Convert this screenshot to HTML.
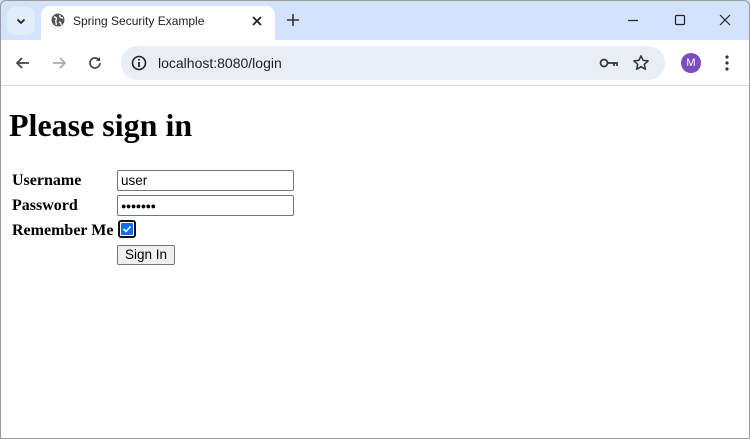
<!DOCTYPE html>
<html><head><style>
*{margin:0;padding:0;box-sizing:border-box}
body{width:750px;height:439px;overflow:hidden;background:#fff;position:relative;font-family:"Liberation Sans",sans-serif}
.frame{position:absolute;inset:0;border:1px solid #9a9a9a;border-radius:6px 6px 0 0;pointer-events:none;z-index:9}
.tabbar{position:absolute;left:0;top:0;width:750px;height:40px;background:#d3e3fd}
.tab{position:absolute;left:41px;top:6px;width:234px;height:36px;background:#fff;border-radius:9px 9px 0 0}
.tab .t{position:absolute;left:32px;top:8px;font-size:12px;color:#222}
.toolbar{position:absolute;left:0;top:40px;width:750px;height:46px;background:#fff;border-bottom:1px solid #d8d8d8}
.omni{position:absolute;left:121px;top:6px;width:544px;height:34px;background:#e9eef6;border-radius:17px}
.omni .u{position:absolute;left:37px;top:9px;font-size:14px;color:#1f1f1f}
svg{position:absolute}
h1{position:absolute;left:9px;top:107px;font-family:"Liberation Serif",serif;font-size:32px;font-weight:bold;color:#000;white-space:nowrap}
.lbl{position:absolute;left:12px;font-family:"Liberation Serif",serif;font-weight:bold;font-size:16px;color:#000}
.inp{position:absolute;left:117px;width:177px;height:21px;border:1px solid #767676;border-radius:2px;font-size:13.5px;padding:1px 3px;line-height:17px}
</style></head><body>
<div class="tabbar">
 <div style="position:absolute;left:7px;top:7px;width:28px;height:28px;background:#e3ecfb;border-radius:8px"></div>
 <svg style="left:14px;top:14px" width="14" height="14" viewBox="0 0 14 14"><path d="M3.5 5.5l3.5 3.5 3.5-3.5" stroke="#222" stroke-width="1.8" fill="none"/></svg>
 <div class="tab">
  <svg style="left:10px;top:7px" width="14" height="14" viewBox="0 0 14 14"><circle cx="7" cy="7" r="6.5" fill="#555"/><path d="M3 4c2 0 3 1 2 3s1 3 0 5M9 2c-1 2 1 3 3 3M8 9c1 0 2 1 2 3" stroke="#fff" stroke-width="1.4" fill="none"/></svg>
  <div class="t">Spring Security Example</div>
  <svg style="left:210px;top:9px" width="12" height="12" viewBox="0 0 12 12"><path d="M2 2l8 8M10 2l-8 8" stroke="#222" stroke-width="1.8"/></svg>
 </div>
 <svg style="left:286px;top:13px" width="14" height="14" viewBox="0 0 14 14"><path d="M7 1v12M1 7h12" stroke="#333" stroke-width="1.6"/></svg>
 <svg style="left:627px;top:14px" width="12" height="12" viewBox="0 0 12 12"><path d="M1 6.5h10" stroke="#222" stroke-width="1.2"/></svg>
 <svg style="left:674px;top:14px" width="12" height="12" viewBox="0 0 12 12"><rect x="1.5" y="1.5" width="9" height="9" rx="1" stroke="#222" stroke-width="1.2" fill="none"/></svg>
 <svg style="left:719px;top:14px" width="12" height="12" viewBox="0 0 12 12"><path d="M1 1l10 10M11 1l-10 10" stroke="#222" stroke-width="1.2"/></svg>
</div>
<div class="toolbar">
 <svg style="left:15px;top:15px" width="16" height="16" viewBox="0 0 16 16"><path d="M14 8H2M7 3L2 8l5 5" stroke="#444" stroke-width="1.7" fill="none"/></svg>
 <svg style="left:51px;top:15px" width="16" height="16" viewBox="0 0 16 16"><path d="M2 8h12M9 3l5 5-5 5" stroke="#aaa" stroke-width="1.7" fill="none"/></svg>
 <svg style="left:87px;top:15px" width="16" height="16" viewBox="0 0 16 16"><path d="M13 8a5 5 0 1 1-1.5-3.6" stroke="#444" stroke-width="1.7" fill="none"/><path d="M13 2v4H9z" fill="#444"/></svg>
 <div class="omni">
  <svg style="left:10px;top:9px" width="16" height="16" viewBox="0 0 16 16"><circle cx="8" cy="8" r="6.5" stroke="#222" stroke-width="1.6" fill="none"/><path d="M8 7v5" stroke="#222" stroke-width="1.8"/><circle cx="8" cy="4.8" r="1" fill="#222"/></svg>
  <div class="u">localhost:8080/login</div>
  <svg style="left:478px;top:10px" width="20" height="14" viewBox="0 0 20 14"><circle cx="5" cy="7" r="3.5" stroke="#333" stroke-width="1.7" fill="none"/><path d="M8.5 7H18v3M15 7v3" stroke="#333" stroke-width="1.7" fill="none"/></svg>
  <svg style="left:511px;top:8px" width="18" height="18" viewBox="0 0 18 18"><path d="M9 1.8l2.1 4.6 5 .5-3.8 3.4 1.1 4.9L9 12.7l-4.4 2.5 1.1-4.9L1.9 6.9l5-.5z" stroke="#333" stroke-width="1.5" fill="none" stroke-linejoin="round"/></svg>
 </div>
 <div style="position:absolute;left:681px;top:13px;width:20px;height:20px;border-radius:50%;background:#7c4dbe;color:#fff;font-size:11px;text-align:center;line-height:20px">M</div>
 <svg style="left:724px;top:14px" width="6" height="18" viewBox="0 0 6 18"><circle cx="3" cy="3" r="1.6" fill="#333"/><circle cx="3" cy="9" r="1.6" fill="#333"/><circle cx="3" cy="15" r="1.6" fill="#333"/></svg>
</div>
<h1>Please sign in</h1>
<div class="lbl" style="top:172px">Username</div>
<div class="lbl" style="top:197px">Password</div>
<div class="lbl" style="top:222px">Remember Me</div>
<div class="inp" style="top:170px">user</div>
<div class="inp" style="top:195px;font-size:9px;letter-spacing:-0.5px;line-height:18px">●●●●●●●</div>
<div style="position:absolute;left:118px;top:220px;width:18px;height:18px;border:2px solid #111;border-radius:3px;background:#fff">
 <div style="position:absolute;left:0px;top:0px;width:14px;height:14px;background:#0b6ef5;border-radius:2px;border:1px solid #fff"></div>
 <svg style="left:2px;top:2px" width="10" height="10" viewBox="0 0 10 10"><path d="M1.5 5l2.5 2.5 4.5-5" stroke="#fff" stroke-width="1.6" fill="none"/></svg>
</div>
<div style="position:absolute;left:117px;top:245px;width:58px;height:20px;border:1px solid #767676;border-radius:2px;background:#efefef;font-size:13.5px;text-align:center;line-height:18px;color:#000">Sign In</div>
<div class="frame"></div>
</body></html>
